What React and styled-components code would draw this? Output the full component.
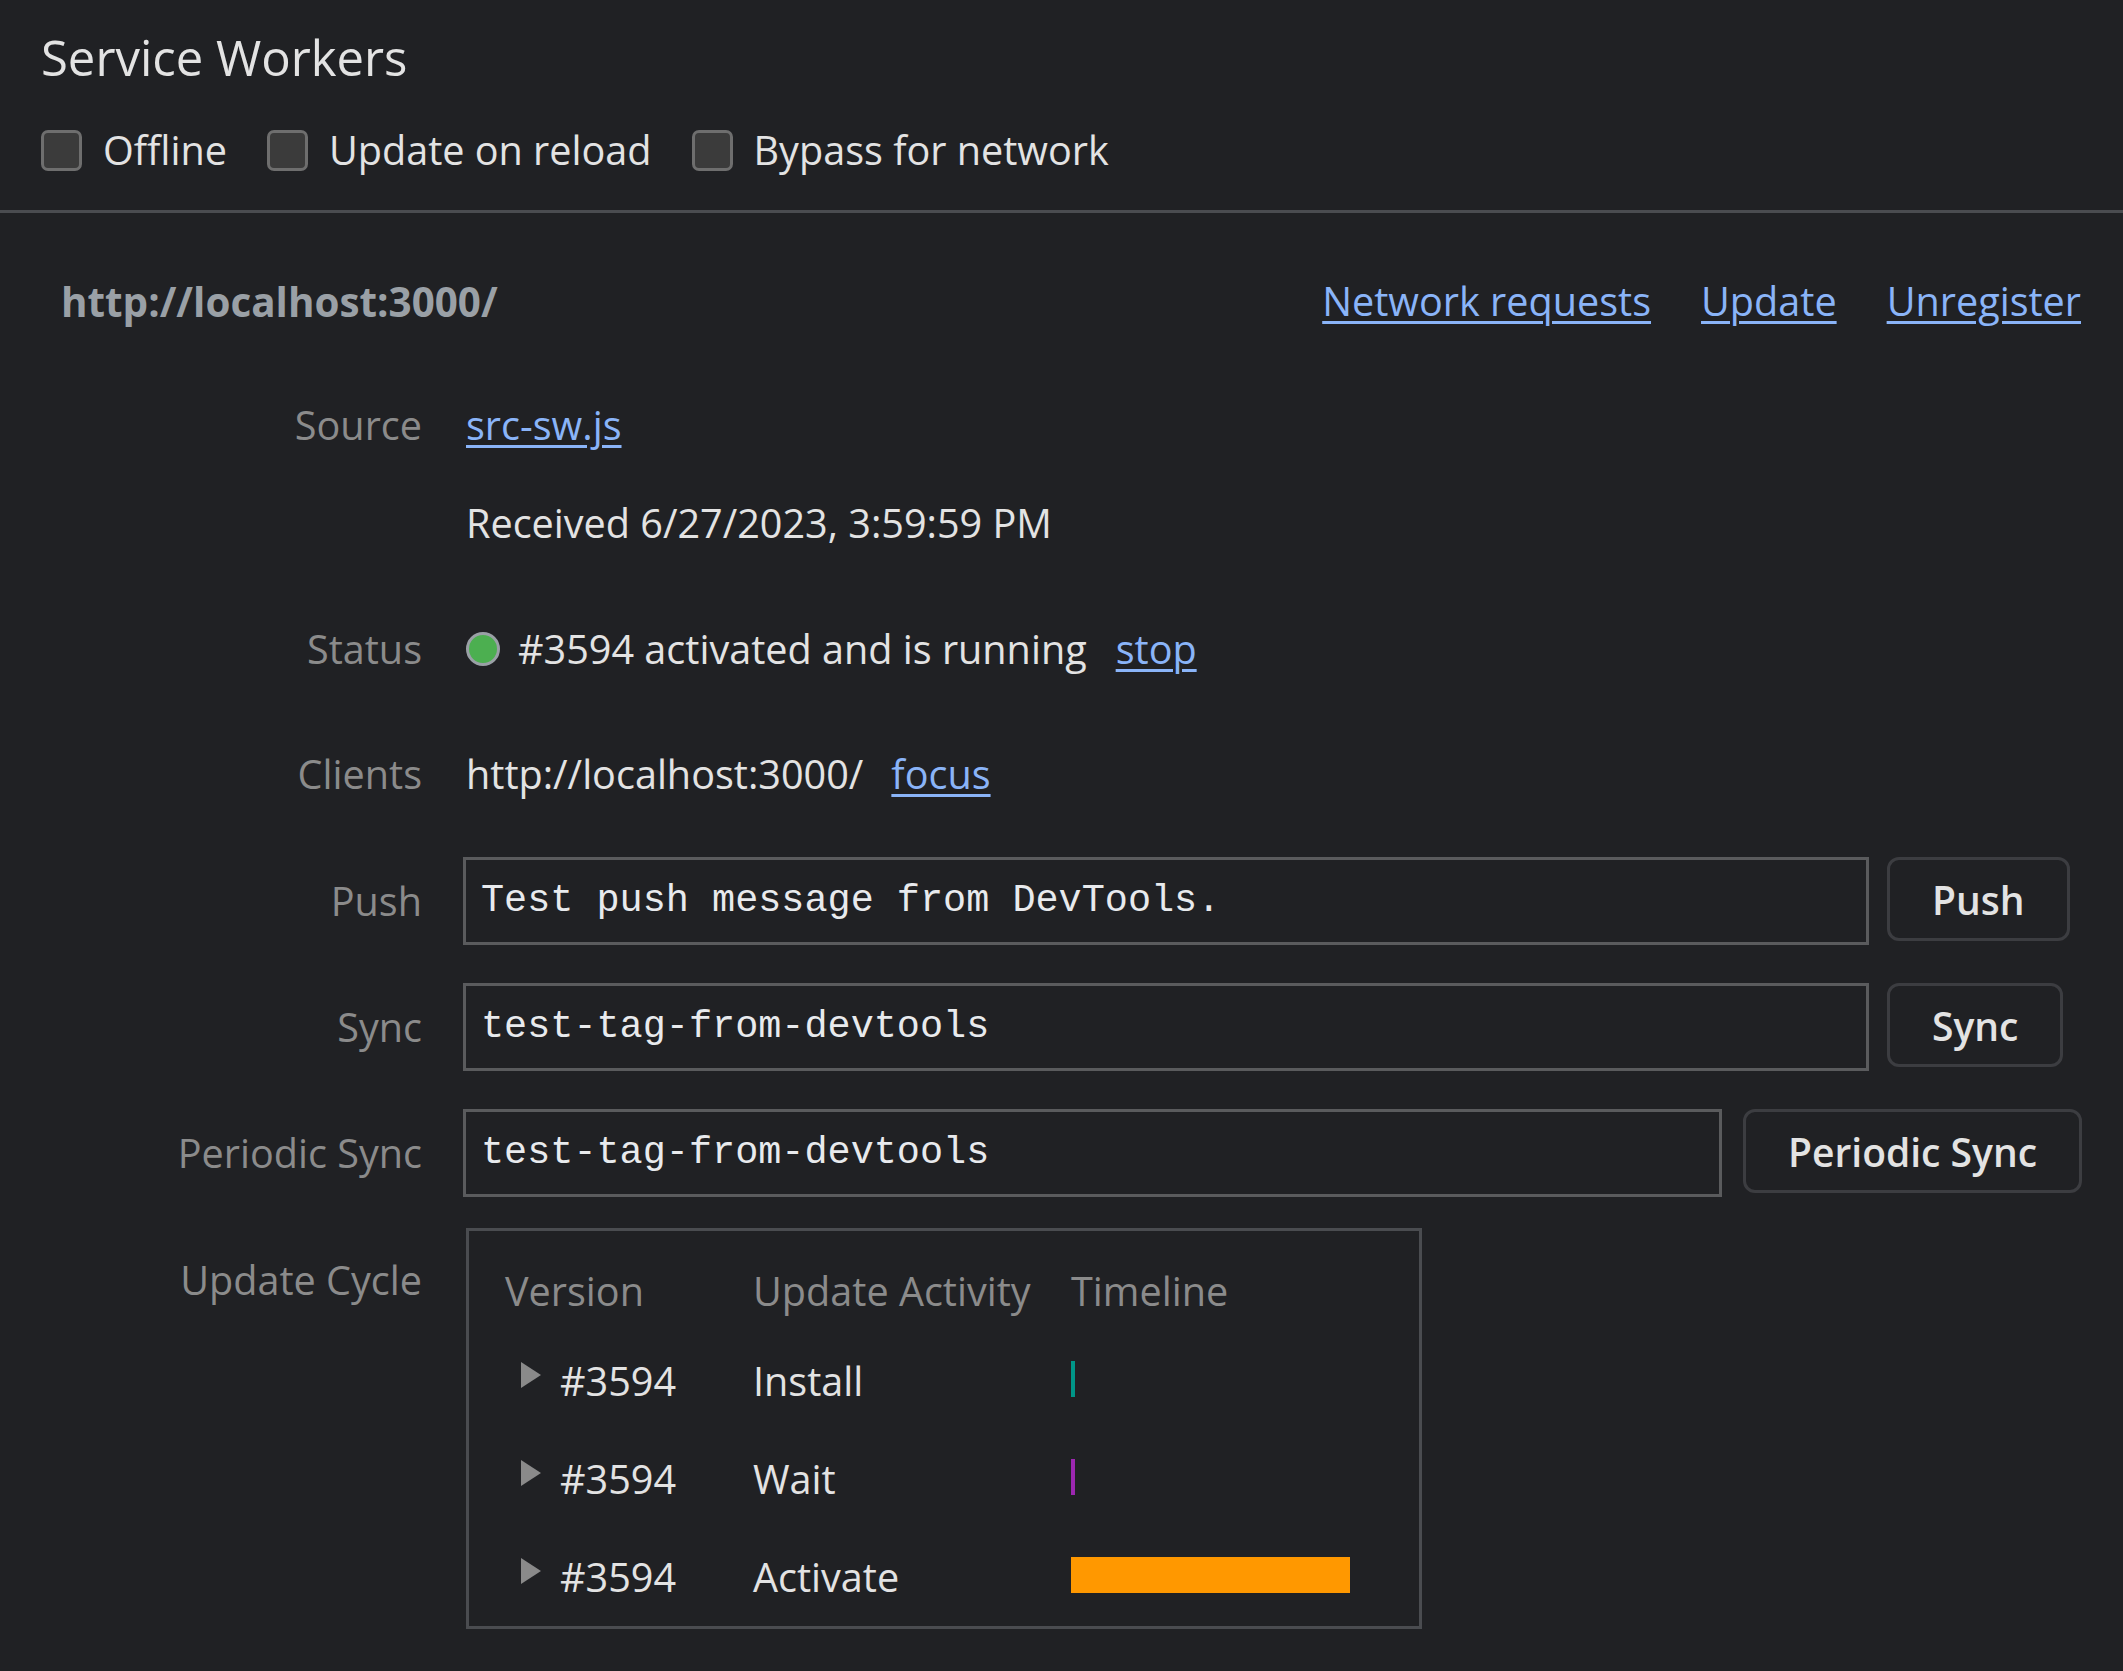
import React from "react";
import styled, { createGlobalStyle } from "styled-components";

const Global = createGlobalStyle`
  html, body {
    margin: 0;
    padding: 0;
    background: #202124;
  }
  body {
    font-family: "Open Sans", "Noto Sans", sans-serif;
    color: #e3e3e3;
  }
`;

const Page = styled.div`
  min-height: 1671px;
  background: #202124;
  font-size: 39.6px;
  color: #e3e3e3;
`;

const TopBar = styled.header`
  padding: 24px 0 30px 41px;
  border-bottom: 3px solid #4a4c50;
`;

const Title = styled.h1`
  margin: 0;
  font-size: 49px;
  font-weight: 400;
  line-height: 66px;
  color: #e3e3e3;
`;

const Toolbar = styled.div`
  display: flex;
  align-items: center;
  gap: 40px;
  height: 60px;
  margin-top: 30px;
`;

const CheckLabel = styled.label`
  display: flex;
  align-items: center;
  gap: 21px;
  line-height: 54px;
`;

const CheckBox = styled.span`
  width: 41px;
  height: 41px;
  box-sizing: border-box;
  border: 3px solid #6e6e6e;
  background: #3b3b3b;
  border-radius: 7px;
`;

const Section = styled.section`
  padding: 61px 42px 0 61px;
`;

const SectionHeader = styled.div`
  display: flex;
  justify-content: space-between;
  align-items: center;
  height: 54px;
`;

const Origin = styled.div`
  font-weight: 700;
  font-size: 40.4px;
  color: #9aa0a6;
`;

const Links = styled.div`
  display: flex;
  gap: 50px;
`;

const Link = styled.a`
  color: #8ab4f8;
  text-decoration: underline;
  text-decoration-thickness: 3px;
  text-underline-offset: 5px;
  cursor: pointer;
  margin-left: ${(p) => p.$ml || 0}px;
`;

const Row = styled.div`
  display: grid;
  grid-template-columns: 361px 1fr;
  column-gap: 44px;
  align-items: ${(p) => (p.$top ? "start" : "center")};
  margin-top: ${(p) => p.$mt}px;
`;

const Label = styled.div`
  text-align: right;
  color: #8b8b8b;
  line-height: 54px;
  margin-top: ${(p) => p.$mt || 0}px;
`;

const Value = styled.div`
  display: flex;
  align-items: center;
  line-height: 54px;
  min-width: 0;
`;

const Stack = styled.div`
  display: flex;
  flex-direction: column;
  line-height: 54px;
`;

const SubLine = styled.div`
  margin-top: 44px;
`;

const Dot = styled.span`
  width: 34px;
  height: 34px;
  box-sizing: border-box;
  border: 3px solid #9aa0a6;
  background: #4caf50;
  border-radius: 50%;
  margin-right: 18px;
`;

const Field = styled.div`
  display: flex;
  align-items: flex-start;
  gap: ${(p) => p.$gap}px;
  margin-left: -3px;
`;

const TextInput = styled.input`
  width: ${(p) => p.$w}px;
  height: 88px;
  box-sizing: border-box;
  border: 3px solid #5a5b5d;
  background: transparent;
  color: #e8eaed;
  font-family: "Liberation Mono", "DejaVu Sans Mono", monospace;
  font-size: 38.5px;
  padding: 0 15px;
  outline: none;
  border-radius: 0;
`;

const Button = styled.button`
  height: 84px;
  box-sizing: border-box;
  padding: 0 42px;
  border: 3px solid #3c3d41;
  border-radius: 12px;
  background: transparent;
  color: #e3e3e3;
  font-family: "Open Sans", sans-serif;
  font-size: 39px;
  font-weight: 600;
  white-space: nowrap;
`;

const Cycle = styled.div`
  width: 956px;
  box-sizing: border-box;
  border: 3px solid #4a4c50;
  padding: 19px 0 0 36px;
  display: grid;
  grid-template-columns: 248px 318px 1fr;
  grid-template-rows: 82px repeat(3, 98px);
  align-items: center;
`;

const HeadCell = styled.div`
  color: #8b8b8b;
  line-height: 54px;
`;

const Cell = styled.div`
  display: flex;
  align-items: center;
  line-height: 54px;
`;

const VersionCell = styled(Cell)`
  padding-left: 16px;
  gap: 19px;
`;

const Triangle = styled.span`
  width: 0;
  height: 0;
  border-left: 20px solid #8a8a8a;
  border-top: 13px solid transparent;
  border-bottom: 13px solid transparent;
  transform: translateY(-6px);
`;

const Bar = styled.span`
  display: block;
  height: 36px;
  width: ${(p) => p.$w}px;
  background: ${(p) => p.$c};
  transform: translateY(-2px);
`;

const checks = ["Offline", "Update on reload", "Bypass for network"];

const cycleRows = [
  { v: "#3594", a: "Install", w: 4, c: "#009688" },
  { v: "#3594", a: "Wait", w: 4, c: "#9c27b0" },
  { v: "#3594", a: "Activate", w: 279, c: "#ff9800" },
];

export default function App() {
  return (
    <Page>
      <Global />
      <TopBar>
        <Title>Service Workers</Title>
        <Toolbar>
          {checks.map((c) => (
            <CheckLabel key={c}>
              <CheckBox />
              {c}
            </CheckLabel>
          ))}
        </Toolbar>
      </TopBar>

      <Section>
        <SectionHeader>
          <Origin>http://localhost:3000/</Origin>
          <Links>
            <Link>Network requests</Link>
            <Link>Update</Link>
            <Link>Unregister</Link>
          </Links>
        </SectionHeader>

        <Row $mt={70} $top>
          <Label>Source</Label>
          <Stack>
            <div>
              <Link>src-sw.js</Link>
            </div>
            <SubLine>Received 6/27/2023, 3:59:59 PM</SubLine>
          </Stack>
        </Row>

        <Row $mt={72}>
          <Label>Status</Label>
          <Value>
            <Dot />
            #3594 activated and is running
            <Link $ml={29}>stop</Link>
          </Value>
        </Row>

        <Row $mt={71}>
          <Label>Clients</Label>
          <Value>
            http://localhost:3000/
            <Link $ml={28}>focus</Link>
          </Value>
        </Row>

        <Row $mt={56}>
          <Label>Push</Label>
          <Field $gap={18}>
            <TextInput $w={1406} defaultValue="Test push message from DevTools." />
            <Button>Push</Button>
          </Field>
        </Row>

        <Row $mt={38}>
          <Label>Sync</Label>
          <Field $gap={18}>
            <TextInput $w={1406} defaultValue="test-tag-from-devtools" />
            <Button>Sync</Button>
          </Field>
        </Row>

        <Row $mt={38}>
          <Label>Periodic Sync</Label>
          <Field $gap={21}>
            <TextInput $w={1259} defaultValue="test-tag-from-devtools" />
            <Button>Periodic Sync</Button>
          </Field>
        </Row>

        <Row $mt={31} $top>
          <Label $mt={25}>Update Cycle</Label>
          <Cycle>
            <HeadCell>Version</HeadCell>
            <HeadCell>Update Activity</HeadCell>
            <HeadCell>Timeline</HeadCell>
            {cycleRows.map((r) => (
              <React.Fragment key={r.a}>
                <VersionCell>
                  <Triangle />
                  {r.v}
                </VersionCell>
                <Cell>{r.a}</Cell>
                <Cell>
                  <Bar $w={r.w} $c={r.c} />
                </Cell>
              </React.Fragment>
            ))}
          </Cycle>
        </Row>
      </Section>
    </Page>
  );
}
